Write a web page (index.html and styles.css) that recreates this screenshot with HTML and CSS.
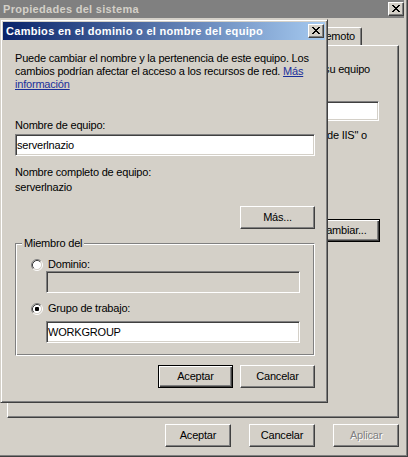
FILE: index.html
```html
<!DOCTYPE html>
<html lang="es">
<head>
<meta charset="utf-8">
<title>Propiedades del sistema</title>
<link rel="stylesheet" href="styles.css">
</head>
<body>
<div class="sys">
  <div class="titlebar titlebar-inactive">
    <span class="title-text">Propiedades del sistema</span>
    <span class="cap-btn"><svg class="x-glyph" width="8" height="7" viewBox="0 0 8 7"><path d="M0 0h2v1h-2z M6 0h2v1h-2z M1 1h2v1h-2z M5 1h2v1h-2z M2 2h4v1h-4z M3 3h2v1h-2z M2 4h4v1h-4z M1 5h2v1h-2z M5 5h2v1h-2z M0 6h2v1h-2z M6 6h2v1h-2z" fill="#000"/></svg></span>
  </div>
  <div class="sys-body">
    <div class="tabs">
      <div class="tab">Remoto</div>
    </div>
    <div class="panel">
      <div class="pline pline-l1">su equipo</div>
      <input class="edit pedit" type="text" value="">
      <div class="pline pline-l3">de IIS" o</div>
      <button class="btn btn-default pbtn">Cambiar...</button>
    </div>
    <div class="sys-buttons">
      <button class="btn sbtn">Aceptar</button>
      <button class="btn sbtn">Cancelar</button>
      <button class="btn sbtn btn-disabled">Aplicar</button>
    </div>
  </div>

  <div class="dlg">
    <div class="titlebar titlebar-active">
      <span class="title-text">Cambios en el dominio o el nombre del equipo</span>
      <span class="cap-btn cap-btn-dlg"><svg class="x-glyph" width="8" height="7" viewBox="0 0 8 7"><path d="M0 0h2v1h-2z M6 0h2v1h-2z M1 1h2v1h-2z M5 1h2v1h-2z M2 2h4v1h-4z M3 3h2v1h-2z M2 4h4v1h-4z M1 5h2v1h-2z M5 5h2v1h-2z M0 6h2v1h-2z M6 6h2v1h-2z" fill="#000"/></svg></span>
    </div>
    <div class="dlg-body">
      <p class="intro">Puede cambiar el nombre y la pertenencia de este equipo. Los cambios podrían afectar el acceso a los recursos de red. <a class="link" href="#">Más información</a></p>
      <div class="label label-name">Nombre de equipo:</div>
      <input class="edit edit-name" type="text" value="serverlnazio">
      <div class="label label-full">Nombre completo de equipo:</div>
      <div class="label label-value">serverlnazio</div>
      <button class="btn dbtn btn-mas">Más...</button>
      <div class="group">
        <span class="group-title">Miembro del</span>
        <div class="radio-row">
          <svg class="radio" width="12" height="12" viewBox="0 0 12 12"><circle cx="6" cy="6" r="4.5" fill="#fff"/><path d="M2.11 9.89A5.5 5.5 0 0 1 9.89 2.11" fill="none" stroke="#808080"/><path d="M9.89 2.11A5.5 5.5 0 0 1 2.11 9.89" fill="none" stroke="#fff"/><path d="M2.82 9.18A4.5 4.5 0 0 1 9.18 2.82" fill="none" stroke="#404040"/><path d="M9.18 2.82A4.5 4.5 0 0 1 2.82 9.18" fill="none" stroke="#d4d0c8"/></svg>
          <span>Dominio:</span>
        </div>
        <input class="edit edit-group edit-disabled" type="text" value="" disabled>
        <div class="radio-row radio-row-2">
          <svg class="radio" width="12" height="12" viewBox="0 0 12 12"><circle cx="6" cy="6" r="4.5" fill="#fff"/><path d="M2.11 9.89A5.5 5.5 0 0 1 9.89 2.11" fill="none" stroke="#808080"/><path d="M9.89 2.11A5.5 5.5 0 0 1 2.11 9.89" fill="none" stroke="#fff"/><path d="M2.82 9.18A4.5 4.5 0 0 1 9.18 2.82" fill="none" stroke="#404040"/><path d="M9.18 2.82A4.5 4.5 0 0 1 2.82 9.18" fill="none" stroke="#d4d0c8"/><rect x="4" y="4" width="4" height="4" rx="1" fill="#000"/></svg>
          <span>Grupo de trabajo:</span>
        </div>
        <input class="edit edit-group edit-wg" type="text" value="WORKGROUP">
      </div>
      <div class="dlg-buttons">
        <button class="btn btn-default dbtn">Aceptar</button>
        <button class="btn dbtn">Cancelar</button>
      </div>
    </div>
  </div>
</div>
</body>
</html>
```
FILE: styles.css
```css
* { box-sizing: border-box; }
html, body { margin: 0; padding: 0; }
body {
  width: 408px;
  height: 457px;
  overflow: hidden;
  background: #d4d0c8;
  font-family: "Liberation Sans", Arial, sans-serif;
  font-size: 11px;
  line-height: 13px;
  letter-spacing: -0.2px;
  color: #000;
}

/* ---------- base controls ---------- */
.btn {
  height: 23px;
  padding: 0;
  margin: 0;
  font: inherit;
  letter-spacing: inherit;
  color: #000;
  background: #d4d0c8;
  border: 1px solid;
  border-color: #fff #404040 #404040 #fff;
  box-shadow: inset -1px -1px #808080;
  border-radius: 0;
  text-align: center;
  line-height: 19px;
  flex-shrink: 0;
}
.btn-default {
  border: 1px solid #000;
  box-shadow: inset 1px 1px #fff, inset -1px -1px #404040, inset -2px -2px #808080;
}
.btn-disabled {
  color: #808080;
  text-shadow: 1px 1px #fff;
}

.edit {
  display: block;
  margin: 0;
  height: 22px;
  padding: 0 0 0 1px;
  font: inherit;
  letter-spacing: inherit;
  color: #000;
  background: #fff;
  border: 1px solid;
  border-color: #808080 #fff #fff #808080;
  box-shadow: inset 1px 1px #404040, inset -1px -1px #d4d0c8;
  border-radius: 0;
  outline: none;
}
.edit-disabled { background: #d4d0c8; }

/* ---------- background window ---------- */
.sys {
  position: relative;
  width: 408px;
  height: 457px;
  background: #d4d0c8;
  border-right: 1px solid #404040;
  border-bottom: 1px solid #404040;
  box-shadow: inset -1px -1px #808080;
  padding: 0 3px 3px 0;
  display: flex;
  flex-direction: column;
}

.titlebar {
  height: 18px;
  flex-shrink: 0;
  display: flex;
  align-items: center;
  justify-content: space-between;
  padding-left: 3px;
  font-weight: bold;
  letter-spacing: 0.3px;
  white-space: nowrap;
}
.titlebar-inactive {
  background: #808080;
  color: #d4d0c8;
}
.titlebar-active {
  background: linear-gradient(to right, #0a246a, #a6caf0);
  color: #fff;
}
.cap-btn {
  width: 16px;
  height: 14px;
  background: #d4d0c8;
  border: 1px solid;
  border-color: #fff #404040 #404040 #fff;
  box-shadow: inset -1px -1px #808080;
  padding: 2px 0 0 3px;
  display: flex;
  align-items: flex-start;
}
.cap-btn-dlg { margin-right: 1px; }
.x-glyph { display: block; }

.sys-body {
  flex: 1;
  display: flex;
  flex-direction: column;
  padding: 0 5px 0 7px;
}

.tabs {
  height: 27px;
  flex-shrink: 0;
  display: flex;
  justify-content: flex-end;
  align-items: flex-end;
  padding-right: 37px;
}
.tab {
  flex-shrink: 0;
  height: 18px;
  padding: 1px 6px 0;
  line-height: 15px;
  white-space: nowrap;
  border: 1px solid #fff;
  border-right-color: #404040;
  border-bottom: 0;
  box-shadow: inset -1px 0 #808080;
  border-radius: 2px 2px 0 0;
}

.panel {
  height: 373px;
  flex-shrink: 0;
  border: 1px solid;
  border-color: #fff #404040 #404040 #fff;
  box-shadow: inset -1px -1px #808080;
  padding-top: 17px;
  display: flex;
  flex-direction: column;
  align-items: flex-end;
}
.pline { white-space: nowrap; }
.pline-l1 { margin-right: 28px; }
.pedit {
  margin-top: 25px;
  width: 200px;
  height: 20px;
  margin-right: 19px;
}
.pline-l3 { margin-top: 8px; margin-right: 31px; }
.pbtn { margin-top: 77px; margin-right: 18px; width: 75px; }

.sys-buttons {
  margin-top: 6px;
  display: flex;
  justify-content: flex-end;
  gap: 18px;
}
.sbtn { width: 66px; }

/* ---------- foreground dialog (window over window) ---------- */
.dlg {
  position: absolute;
  left: 0;
  top: 19px;
  width: 328px;
  height: 384px;
  background: #d4d0c8;
  border: 1px solid;
  border-color: #d4d0c8 #404040 #404040 #d4d0c8;
  box-shadow: inset 1px 1px #fff, inset -1px -1px #808080;
  padding: 2px;
  display: flex;
  flex-direction: column;
}
.dlg-body {
  flex: 1;
  display: flex;
  flex-direction: column;
  padding: 12px 10px 0 12px;
}
.intro { margin: 0; }
.link { color: #1a2f9a; text-decoration: underline; }
.label-name { margin-top: 28px; }
.edit-name { margin-top: 2px; width: 300px; }
.label-full { margin-top: 10px; }
.label-value { margin-top: 2px; }
.dbtn { width: 75px; }
.btn-mas { margin-top: 12px; align-self: flex-end; }

.group {
  position: relative;
  margin-top: 14px;
  height: 113px;
  border: 1px solid;
  border-color: #808080 #fff #fff #808080;
  box-shadow: inset 1px 1px #fff, inset -1px -1px #808080;
  padding: 14px 13px 0 15px;
}
.group-title {
  position: absolute;
  top: -7px;
  left: 6px;
  padding: 0 2px;
  background: #d4d0c8;
  line-height: 13px;
}
.radio-row {
  height: 13px;
  display: flex;
  align-items: center;
  gap: 5px;
}
.radio { display: block; flex-shrink: 0; }
.radio-row-2 { margin-top: 9px; }
.edit-group { margin-left: 15px; width: 254px; }
.edit-wg { margin-top: 6px; }

.dlg-buttons {
  margin-top: 9px;
  display: flex;
  justify-content: flex-end;
  gap: 7px;
}
```
